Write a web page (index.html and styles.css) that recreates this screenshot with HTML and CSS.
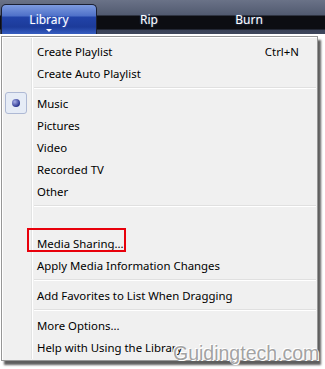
FILE: index.html
```html
<!DOCTYPE html>
<html lang="en">
<head>
  <meta charset="UTF-8">
  <title>Library menu</title>
  <link rel="stylesheet" href="styles.css">
</head>
<body>

<!-- tab bar -->
<div class="tabbar">
  <div class="tab active">Library<span class="arrow"></span></div>
  <div class="tab">Rip</div>
  <div class="tab">Burn</div>
</div>

<!-- library dropdown -->
<ul class="menu">
  <li>Create Playlist<span class="key">Ctrl+N</span></li>
  <li>Create Auto Playlist</li>
  <li class="divider"></li>
  <li class="checked"><span class="radio"><i></i></span>Music</li>
  <li>Pictures</li>
  <li>Video</li>
  <li>Recorded TV</li>
  <li>Other</li>
  <li class="divider"></li>
  <li class="blank"></li>
  <li class="marked">Media Sharing...</li>
  <li>Apply Media Information Changes</li>
  <li class="divider"></li>
  <li>Add Favorites to List When Dragging</li>
  <li class="divider"></li>
  <li>More Options...</li>
  <li>Help with Using the Library</li>
</ul>

<div class="watermark">Guidingtech.com</div>

</body>
</html>
```

FILE: styles.css
```css
html,body{
  margin: 0;
  background-color: #fff;
}
body{
  position: relative;
  width: 325px;
  height: 369px;
  overflow: hidden;
  font-family: "Noto Sans", "Open Sans", sans-serif;
}

.tabbar{
  display: flex;
  gap: 4px;
  height: 34px;
  padding-left: 1px;
  box-sizing: border-box;
  background: linear-gradient(#6a7287 0, #515a70 15px, #0c0d12 16px, #0c0d12 29px, #394157 30px, #3e465c 34px);
}
.tab{
  width: 96px;
  color: #fff;
  font-size: 12px;
  text-align: center;
  line-height: 40px;
  text-shadow: 0 0 2px rgba(120,160,255,.6);
}
.tab.active{
  position: relative;
  margin-top: 4px;
  line-height: 30px;
  border: 1px solid #1b2033;
  border-bottom: 0;
  border-radius: 5px 5px 0 0;
  background: linear-gradient(#7d9be0 0, #4e70c8 11px, #2143a8 12px, #1c3b9a 22px, #3b63c6 30px);
  box-sizing: border-box;
}
.tab .arrow{
  position: absolute;
  left: 44px;
  bottom: 2px;
  border-left: 3px solid transparent;
  border-right: 3px solid transparent;
  border-top: 3px solid #fff;
}

.menu{
  position: relative;
  list-style: none;
  margin: 2px 0 0 1px;
  padding: 3px 1px 2px 1px;
  width: 317px;
  box-sizing: border-box;
  background-color: #f0f0f0;
  border: 1px solid #979797;
  box-shadow: inset 1px 1px 0 #fff, 3px 4px 2px rgba(40,40,40,.75);
}
.menu::before{
  content: "";
  position: absolute;
  left: 29px;
  top: 1px;
  bottom: 1px;
  width: 1px;
  background-color: #e2e3e3;
  border-right: 1px solid #fff;
}
.menu li{
  position: relative;
  display: flex;
  align-items: center;
  height: 22px;
  padding-left: 34px;
  padding-right: 17px;
  font-size: 11.4px;
  color: #000;
  cursor: default;
}
.menu li .key{
  margin-left: auto;
}
.menu li.divider{
  height: 8px;
  padding: 0;
  margin-left: 31px;
  background: linear-gradient(transparent 3px, #e0e0e0 3px, #e0e0e0 4px, #fff 4px, #fff 5px, transparent 5px);
}
.menu li.checked .radio{
  position: absolute;
  left: 2px;
  top: 0;
  width: 20px;
  height: 20px;
  border: 1px solid #aeb9d4;
  border-radius: 3px;
  background-color: #e6ecf6;
}
.menu li.checked .radio i{
  position: absolute;
  left: 6px;
  top: 6px;
  width: 8px;
  height: 8px;
  border-radius: 50%;
  background: radial-gradient(circle at 35% 35%, #a6aee8, #2a3590 70%, #1c2468);
}
.menu li.marked::after{
  content: "";
  position: absolute;
  left: 24px;
  top: -4px;
  width: 95px;
  height: 20px;
  border: 2px solid #e8000b;
}

.watermark{
  position: absolute;
  left: 173px;
  top: 342px;
  font-family: "Liberation Sans", Arial, sans-serif;
  font-size: 19.5px;
  color: #a3a3a3;
  text-shadow: 0 0 1px #fff, 1px 1px 0 #fff, -1px -1px 0 #fff;
}
```
